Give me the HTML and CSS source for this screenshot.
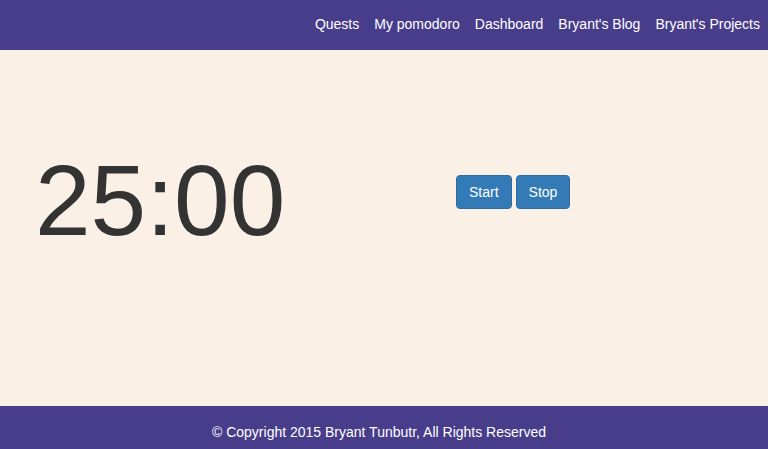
FILE: index.html
```html
<!DOCTYPE html>
<html lang="en">
<head>
<meta charset="utf-8">
<title>My pomodoro</title>
<link rel="stylesheet" href="styles.css">
</head>
<body>
<nav class="navbar">
  <ul class="nav-links">
    <li><a href="#">Quests</a></li>
    <li><a href="#">My pomodoro</a></li>
    <li><a href="#">Dashboard</a></li>
    <li><a href="#">Bryant's Blog</a></li>
    <li><a href="#">Bryant's Projects</a></li>
  </ul>
</nav>
<main class="main">
  <div class="timer-col">
    <h1 class="timer">25:00</h1>
  </div>
  <div class="controls">
    <button class="btn">Start</button>
    <button class="btn">Stop</button>
  </div>
</main>
<footer class="footer">
  <p class="copy">© Copyright 2015 Bryant Tunbutr, All Rights Reserved</p>
</footer>
</body>
</html>
```
FILE: styles.css
```css
html { overflow: hidden; }
body {
  margin: 0;
  font-family: "Liberation Sans", Arial, sans-serif;
  font-size: 14px;
  line-height: 20px;
  color: #333;
  background: #faf0e6;
}
.navbar {
  background: #483d8b;
  height: 50px;
  display: flex;
  justify-content: flex-end;
}
.nav-links {
  list-style: none;
  margin: 0;
  padding: 0 8px 0 0;
  display: flex;
  gap: 15px;
}
.nav-links a {
  display: block;
  padding: 14px 0 16px;
  color: #fff;
  text-decoration: none;
}
.main {
  height: 356px;
  display: flex;
  align-items: flex-start;
  padding-left: 35px;
}
.timer-col {
  width: 421px;
  margin-top: 95px;
}
.timer {
  margin: 0;
  font-size: 100px;
  line-height: 110px;
  font-weight: 400;
  color: #333;
}
.controls {
  margin-top: 125px;
  display: flex;
  gap: 4px;
}
.btn {
  font-family: inherit;
  font-size: 14px;
  line-height: 20px;
  padding: 6px 12px;
  color: #fff;
  background: #337ab7;
  border: 1px solid #2e6da4;
  border-radius: 4px;
  cursor: pointer;
}
.footer {
  background: #483d8b;
  height: 50px;
  padding-top: 16px;
  box-sizing: border-box;
}
.copy {
  margin: 0;
  text-align: center;
  color: #fff;
  padding-right: 10px;
}
```
